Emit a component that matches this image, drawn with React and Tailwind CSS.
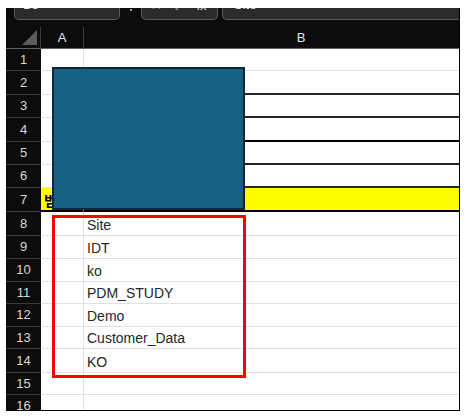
import React from "react";

const font = { fontFamily: '"Liberation Sans", Arial, "Noto Sans CJK KR", sans-serif' };

// 行データ（高さは画面に合わせて1行ずつ）
const rows = [
  { n: 1, h: "h-[22px]" },
  { n: 2, h: "h-[24px]", line: true },
  { n: 3, h: "h-[23px]", line: true },
  { n: 4, h: "h-[24px]", line: true, black: true },
  { n: 5, h: "h-[23px]", line: true },
  { n: 6, h: "h-[23px]", line: true },
  { n: 7, h: "h-[24px]", yellow: true },
  { n: 8, h: "h-[24px]", b: "Site" },
  { n: 9, h: "h-[23px]", b: "IDT" },
  { n: 10, h: "h-[23px]", b: "ko" },
  { n: 11, h: "h-[22px]", b: "PDM_STUDY" },
  { n: 12, h: "h-[23px]", b: "Demo" },
  { n: 13, h: "h-[22px]", b: "Customer_Data" },
  { n: 14, h: "h-[24px]", b: "KO" },
  { n: 15, h: "h-[22px]" },
  { n: 16, h: "h-[22px]" },
];

function Row({ row }) {
  const cellB = row.yellow
    ? "bg-[#ffff00] border-b-2 border-black"
    : row.line
    ? row.black
      ? "border-b-2 border-black"
      : "border-b-2 border-[#262626]"
    : "border-b border-[#e1e1e1]";
  const cellA = row.yellow
    ? "bg-[#ffff00] border-b-2 border-black"
    : "border-b border-[#e1e1e1]";

  return (
    <div className={`flex ${row.h}`}>
      <div className="w-[35px] shrink-0 flex items-center justify-center border-b border-[#3c3c3c] bg-[#0c0c0c] text-[13px] text-[#d9d9d9]">
        {row.n}
      </div>
      <div className={`relative w-[43px] shrink-0 border-r border-r-[#e1e1e1] ${cellA}`}>
        {row.yellow && (
          <span className="absolute left-[3px] bottom-[2px] whitespace-nowrap text-[14px] font-bold leading-none text-black">
            범례
          </span>
        )}
      </div>
      <div className={`flex w-[434px] shrink-0 items-end pl-[3px] pb-[1px] text-[14px] leading-[17px] text-[#262626] ${cellB}`}>
        {row.b}
      </div>
    </div>
  );
}

export default function App() {
  return (
    <div className="h-[419px] w-[467px] bg-white" style={font}>
      <div className="relative ml-[6px] pt-[8px]">
        <div className="relative h-[403px] w-[454px] overflow-hidden border-r border-b border-black bg-white">

          {/* ── 数式バー ── */}
          <div className="relative flex h-[19px] bg-[#0c0c0c]">
            <div className="ml-[8px] h-[12px] w-[106px] overflow-hidden rounded-b-[5px] border border-t-0 border-[#5b5b5b] bg-[#2b2b2b]">
              <div className="-mt-[10px] pl-[8px] text-[13px] leading-[14px] text-[#e6e6e6]">B8</div>
            </div>
            <div className="ml-[10px] mt-[1px] h-[2px] w-[2px] rounded-full bg-[#d0d0d0]" />
            <div className="ml-[9px] flex h-[12px] w-[77px] items-start overflow-hidden rounded-b-[5px] border border-t-0 border-[#5b5b5b] bg-[#2b2b2b] pl-[9px] text-[#9a9a9a]">
              <span className="-mt-[9px] text-[13px] leading-[14px]">✕</span>
              <span className="-mt-[9px] ml-[12px] text-[13px] leading-[14px]">✓</span>
              <span className="-mt-[9px] ml-[14px] text-[13px] italic leading-[14px] text-[#e0e0e0]">fx</span>
            </div>
            <div className="ml-[4px] h-[12px] flex-1 overflow-hidden rounded-bl-[5px] border border-t-0 border-r-0 border-[#5b5b5b] bg-[#2b2b2b]">
              <div className="-mt-[10px] pl-[11px] text-[13px] leading-[14px] text-[#e6e6e6]">Site</div>
            </div>
          </div>

          {/* ── 列見出し ── */}
          <div className="flex h-[22px] border-b border-[#5f5f5f] bg-[#0c0c0c] text-[13px] text-[#dfe7ef]">
            <div className="relative w-[35px] shrink-0 border-r border-[#3c3c3c]">
              <svg className="absolute left-[16px] top-[3px]" width="15" height="15" viewBox="0 0 15 15">
                <polygon points="15,0 15,15 0,15" fill="#5c5c5c" />
              </svg>
            </div>
            <div className="flex w-[43px] shrink-0 items-center justify-center border-r border-[#3c3c3c]">A</div>
            <div className="flex w-[434px] shrink-0 items-center justify-center">B</div>
          </div>

          {/* ── セル ── */}
          <div>
            {rows.map((row) => (
              <Row key={row.n} row={row} />
            ))}
          </div>

          {/* 図形（青） */}
          <div className="absolute left-[46px] top-[59px] h-[143px] w-[193px] border-2 border-[#0d2a3b] bg-[#186084]" />

          {/* 赤枠 */}
          <div className="absolute left-[46px] top-[207px] h-[163px] w-[194px] border-[3px] border-[#ff0000]" />
        </div>
      </div>
    </div>
  );
}
